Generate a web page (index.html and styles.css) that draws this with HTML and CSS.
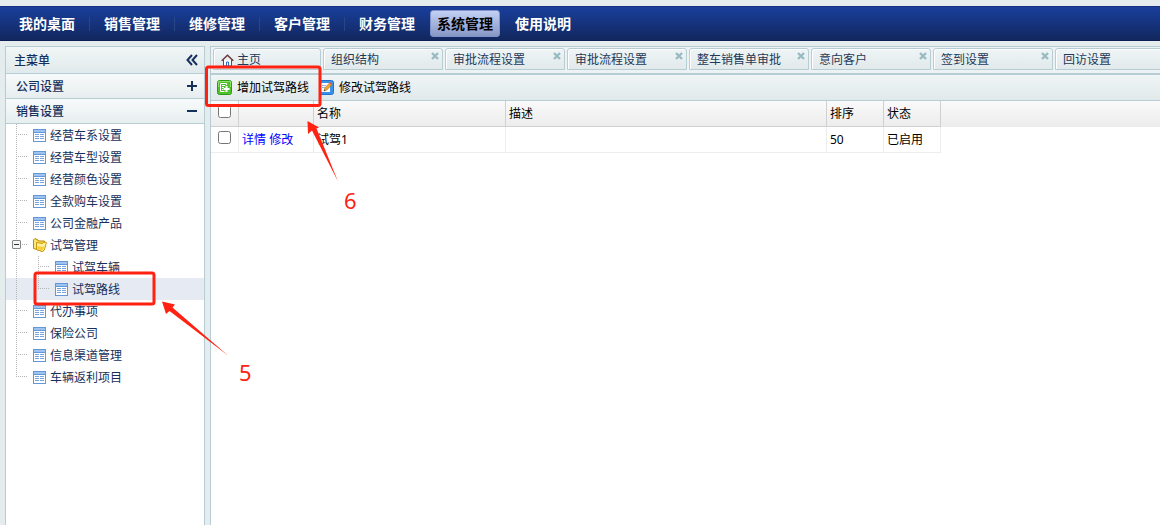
FILE: index.html
```html
<!DOCTYPE html>
<html lang="zh-CN">
<head>
<meta charset="utf-8">
<meta name="viewport" content="width=device-width, initial-scale=1">
<title>系统管理</title>
<link rel="stylesheet" href="styles.css">
</head>
<body>
<svg class="defs" aria-hidden="true">
  <symbol id="grid" viewBox="0 0 13 13"><path fill="#6497d8" d="M0 0h13v13H0z"/><path fill="#fff" d="M1 4h11v8H1z"/><path fill="#9dc3f0" d="M1 1h11v2H1z"/><path stroke="#78a5dd" d="M2 5.500h4M7 5.500h4M2 7.500h4M7 7.500h4M2 9.500h4M7 9.500h4"/></symbol>
  <symbol id="close" viewBox="0 0 8 8"><path d="M1 1l6 6M7 1L1 7" stroke="#99bbc3" stroke-width="2.400"/></symbol>
</svg>

<nav class="nav" aria-label="主导航">
  <button class="nav-item">我的桌面</button><span class="nav-sep"></span>
  <button class="nav-item">销售管理</button><span class="nav-sep"></span>
  <button class="nav-item">维修管理</button><span class="nav-sep"></span>
  <button class="nav-item">客户管理</button><span class="nav-sep"></span>
  <button class="nav-item">财务管理</button>
  <button class="nav-item nav-item-active">系统管理</button>
  <button class="nav-item">使用说明</button>
</nav>

<div class="layout">
  <aside class="sidebar">
    <div class="side-title"><span>主菜单</span>
      <button class="icon-button" aria-label="收起菜单"><svg width="12" height="12" viewBox="0 0 12 12"><path d="M6 1L1.500 6 6 11M11 1L6.500 6 11 11" fill="none" stroke="#15305b" stroke-width="2"/></svg></button>
    </div>
    <button class="side-section"><span>公司设置</span><svg width="12" height="12" viewBox="0 0 12 12"><path d="M1 6h10M6 1v10" stroke="#15305b" stroke-width="2"/></svg></button>
    <button class="side-section"><span>销售设置</span><svg width="12" height="12" viewBox="0 0 12 12"><path d="M1 6h10" stroke="#15305b" stroke-width="2"/></svg></button>
    <ul class="tree">
      <li class="row"><span class="line tee"></span><svg class="leaf"><use href="#grid"/></svg><a href="#">经营车系设置</a></li>
      <li class="row"><span class="line tee"></span><svg class="leaf"><use href="#grid"/></svg><a href="#">经营车型设置</a></li>
      <li class="row"><span class="line tee"></span><svg class="leaf"><use href="#grid"/></svg><a href="#">经营颜色设置</a></li>
      <li class="row"><span class="line tee"></span><svg class="leaf"><use href="#grid"/></svg><a href="#">全款购车设置</a></li>
      <li class="row"><span class="line tee"></span><svg class="leaf"><use href="#grid"/></svg><a href="#">公司金融产品</a></li>
      <li class="row"><span class="line tee"><button class="fold" aria-label="折叠试驾管理"></button></span><svg class="folder" viewBox="0 0 14 14"><path d="M.500 2L2 .500l3 1.500 1 1h5.500v9L9.500 13.500.500 10.500z" fill="#f6d84a" stroke="#b88b14"/><path d="M2 2v8" stroke="#fff6b8"/><path d="M3.500 4.500l6 1L10.500 4l3 .500-2 7-2 2-6-2z" fill="#fff0a0" stroke="#c99b13"/><path d="M4.500 8l5.500 1 1.500-2-1 4-1.500 1.500-4.500-1.500z" fill="#f5cf35"/></svg><a href="#">试驾管理</a></li>
      <li class="row"><span class="line"></span><span class="line tee"></span><svg class="leaf"><use href="#grid"/></svg><a href="#">试驾车辆</a></li>
      <li class="row row-selected"><span class="line"></span><span class="line tee end"></span><svg class="leaf"><use href="#grid"/></svg><a href="#">试驾路线</a></li>
      <li class="row"><span class="line tee"></span><svg class="leaf"><use href="#grid"/></svg><a href="#">代办事项</a></li>
      <li class="row"><span class="line tee"></span><svg class="leaf"><use href="#grid"/></svg><a href="#">保险公司</a></li>
      <li class="row"><span class="line tee"></span><svg class="leaf"><use href="#grid"/></svg><a href="#">信息渠道管理</a></li>
      <li class="row"><span class="line tee end"></span><svg class="leaf"><use href="#grid"/></svg><a href="#">车辆返利项目</a></li>
    </ul>
  </aside>

  <main class="main">
    <div class="tabs">
      <div class="tab tab-home"><button class="tab-label"><svg width="13" height="13" viewBox="0 0 13 13"><path d="M2.500 6v6h8V6" fill="#fff" stroke="#245a9c"/><path d="M5.500 12V8h2v4" fill="none" stroke="#2a6fc4"/><path d="M.700 6.800L6.500 1.200l5.800 5.600" fill="none" stroke="#67363b" stroke-width="1.400"/></svg>主页</button></div>
      <div class="tab"><button class="tab-label">组织结构</button><button class="tab-close" aria-label="关闭"><svg><use href="#close"/></svg></button></div>
      <div class="tab"><button class="tab-label">审批流程设置</button><button class="tab-close" aria-label="关闭"><svg><use href="#close"/></svg></button></div>
      <div class="tab"><button class="tab-label">审批流程设置</button><button class="tab-close" aria-label="关闭"><svg><use href="#close"/></svg></button></div>
      <div class="tab"><button class="tab-label">整车销售单审批</button><button class="tab-close" aria-label="关闭"><svg><use href="#close"/></svg></button></div>
      <div class="tab"><button class="tab-label">意向客户</button><button class="tab-close" aria-label="关闭"><svg><use href="#close"/></svg></button></div>
      <div class="tab"><button class="tab-label">签到设置</button><button class="tab-close" aria-label="关闭"><svg><use href="#close"/></svg></button></div>
      <div class="tab"><button class="tab-label">回访设置</button><button class="tab-close" aria-label="关闭"><svg><use href="#close"/></svg></button></div>
    </div>
    <div class="toolbar">
      <button class="tool"><svg width="15" height="15" viewBox="0 0 15 15"><rect x=".500" y=".500" width="14" height="14" rx="2" fill="#4fc22b" stroke="#2e9a1d"/><path d="M1.500 7V1.500h12V7" fill="none" stroke="#8be065"/><path d="M9.500 5V3.500h-6v8h4" fill="none" stroke="#fff"/><path d="M5 5.500h3M5 7.500h2M5 9.500h1" stroke="#fff"/><path d="M9.500 6v6M6.500 9h6" stroke="#fff" stroke-width="2"/></svg>增加试驾路线</button>
      <button class="tool"><svg width="15" height="15" viewBox="0 0 15 15"><rect x=".500" y=".500" width="14" height="14" rx="2" fill="#3b91ea" stroke="#2472cc"/><path d="M2 3h9v9H2z" fill="#fff"/><path d="M3 5.500h4M3 7.500h3" stroke="#9bb6d0"/><path d="M5 11l.800-3L11 2.500l2 2L7.800 10z" fill="#f3a52e" stroke="#a86a1b" stroke-width=".600"/><path d="M10.200 3.200l2 2L13 4.300l-2-2z" fill="#e46045"/><path d="M5 11l.500-1.600 1 1z" fill="#333"/></svg>修改试驾路线</button>
    </div>
    <div class="grid">
      <table>
        <colgroup><col class="c-check"><col class="c-action"><col class="c-name"><col class="c-desc"><col class="c-short"><col class="c-short"></colgroup>
        <thead><tr><th class="check"><input type="checkbox" aria-label="全选"></th><th></th><th>名称</th><th>描述</th><th>排序</th><th>状态</th></tr></thead>
        <tbody><tr><td class="check"><input type="checkbox" aria-label="选择试驾1"></td><td><a href="#">详情</a> <a href="#">修改</a></td><td>试驾1</td><td></td><td>50</td><td>已启用</td></tr></tbody>
      </table>
    </div>
  </main>
</div>

<svg class="notes" width="400" height="400" viewBox="0 0 400 400">
  <g fill="none" stroke="#ff2213" stroke-width="3"><rect x="206.500" y="67" width="113.500" height="38.500" rx="2"/><rect x="35" y="273" width="119" height="31" rx="2"/></g>
  <g fill="#ff2213"><path d="M307.500 121L319 127.500 316.500 128.500 338 181.500 312 130.500 308 134z"/><path d="M162 301.500L175 304.500 172.500 307.500 228 355.500 169.500 311 166 314z"/></g>
  <g class="note-text"><text x="344" y="209">6</text><text x="239" y="381">5</text></g>
</svg>
</body>
</html>
```
FILE: styles.css
```css
* { box-sizing: border-box; }
body {
  margin: 0;
  padding-top: 6px;
  min-height: 100vh;
  display: flex;
  flex-direction: column;
  background: #e4ecee;
  color: #000;
  font: 12px/20px "Noto Sans", "Noto Sans CJK SC", sans-serif;
  overflow: hidden;
}
button { margin: 0; padding: 0; border: 0; background: none; color: inherit; font: inherit; cursor: pointer; }
svg { flex: none; }
.defs { position: absolute; width: 0; height: 0; }

.nav {
  display: flex;
  align-items: center;
  height: 35px;
  padding-left: 12px;
  border-top: 1px solid #16327e;
  border-bottom: 1px solid #0c1f57;
  background: linear-gradient(#193f9c, #12275e);
}
.nav-item { width: 70px; height: 27px; border: 1px solid transparent; border-radius: 3px; color: #fff; font-size: 14px; font-weight: 700; white-space: nowrap; }
.nav-item-active { margin: 0 8px; border-color: #7f93c8; background: linear-gradient(#c3d0f4, #8797c5); color: #000; }
.nav-sep { width: 1px; height: 14px; margin: 0 7px; background: #294787; }

.layout { flex: 1; display: flex; gap: 5px; padding: 5px 0 0 5px; }
.sidebar { flex: none; width: 200px; border: 1px solid #b5cdd3; border-bottom: 0; background: #fff; color: #15305b; }
.side-title, .side-section {
  display: flex;
  align-items: center;
  justify-content: space-between;
  width: 100%;
  border-bottom: 1px solid #b5cdd3;
  font-weight: 500;
}
.side-title { height: 27px; padding: 0 6px 0 8px; background: linear-gradient(#f1f6f6, #e0e9eb); }
.side-section { height: 25px; padding: 0 6px 0 10px; background: linear-gradient(#f7fafa, #e7eeef); }
.side-title span, .side-section span { padding-top: 2px; }
.icon-button { display: flex; }

.tree { margin: 0; padding: 0; list-style: none; }
.row { display: flex; align-items: flex-start; height: 22px; }
.row-selected { background: #e6ebf3; }
.row a { color: inherit; line-height: 24px; text-decoration: none; }
.leaf { width: 13px; height: 13px; margin: 5px 4px 0 5px; }
.folder { width: 14px; height: 14px; margin: 4px 3px 0 5px; }
.line { position: relative; display: flex; width: 22px; height: 22px; }
.line::before {
  content: "";
  width: 1px;
  height: 22px;
  margin-left: 10px;
  background: linear-gradient(#b4b4b4 50%, transparent 50%) 0 0 / 1px 2px;
}
.tee::after {
  content: "";
  width: 10px;
  height: 1px;
  margin-top: 10px;
  margin-left: 1px;
  background: linear-gradient(90deg, #b4b4b4 50%, transparent 50%) 0 0 / 2px 1px;
}
.end::before { height: 11px; }
.fold {
  position: absolute;
  left: 6px;
  top: 6px;
  width: 9px;
  height: 9px;
  border: 1px solid #848484;
  border-radius: 1px;
  background: linear-gradient(#333, #333) center / 5px 1px no-repeat, #f5f5f5;
}

.main { flex: 1; min-width: 0; border-top: 1px solid #b5cdd3; border-left: 1px solid #b5cdd3; background: #fff; }
.tabs { display: flex; gap: 2px; height: 28px; padding: 1px 0 3px 2px; border-bottom: 2px solid #b5cdd3; background: #edf3f5; overflow: hidden; }
.tab {
  display: flex;
  align-items: flex-start;
  justify-content: space-between;
  flex: none;
  width: 120px;
  padding: 0 3px 0 7px;
  border: 1px solid #b5cdd3;
  border-radius: 3px 3px 0 0;
  box-shadow: inset 1px 1px #fff;
  background: linear-gradient(#eff5f6, #e1e9eb);
  color: #1e3959;
}
.tab-home { width: 108px; }
.tab-label { display: flex; align-items: center; gap: 3px; line-height: 22px; white-space: nowrap; }
.tab-close { display: flex; padding-top: 3px; }
.tab-close svg { width: 8px; height: 8px; }

.toolbar { display: flex; align-items: center; gap: 10px; height: 26px; padding-left: 6px; border-bottom: 1px solid #b5cdd3; background: linear-gradient(#f0f5f5, #e0e9eb); }
.tool { display: flex; align-items: center; gap: 5px; white-space: nowrap; }

.grid { background: linear-gradient(#fafafa, #ececec) 0 0 / 100% 26px no-repeat; }
table { width: 730px; table-layout: fixed; border-collapse: separate; border-spacing: 0; }
.c-check { width: 28px; }
.c-action { width: 75px; }
.c-name { width: 192px; }
.c-desc { width: 321px; }
.c-short { width: 57px; }
th, td { height: 26px; padding: 0 3px; border-right: 1px solid #ededed; border-bottom: 1px solid #ededed; text-align: left; font-weight: 400; }
th { border-color: #d0d0d0; }
td a { color: #00f; text-decoration: none; }
.check { padding: 4px 0 0 7px; vertical-align: top; line-height: 1; }
.check input { display: block; width: 13px; height: 13px; margin: 0; }

.notes { position: absolute; left: 0; top: 0; pointer-events: none; }
.note-text { fill: #ff2213; font-size: 22px; }
```
